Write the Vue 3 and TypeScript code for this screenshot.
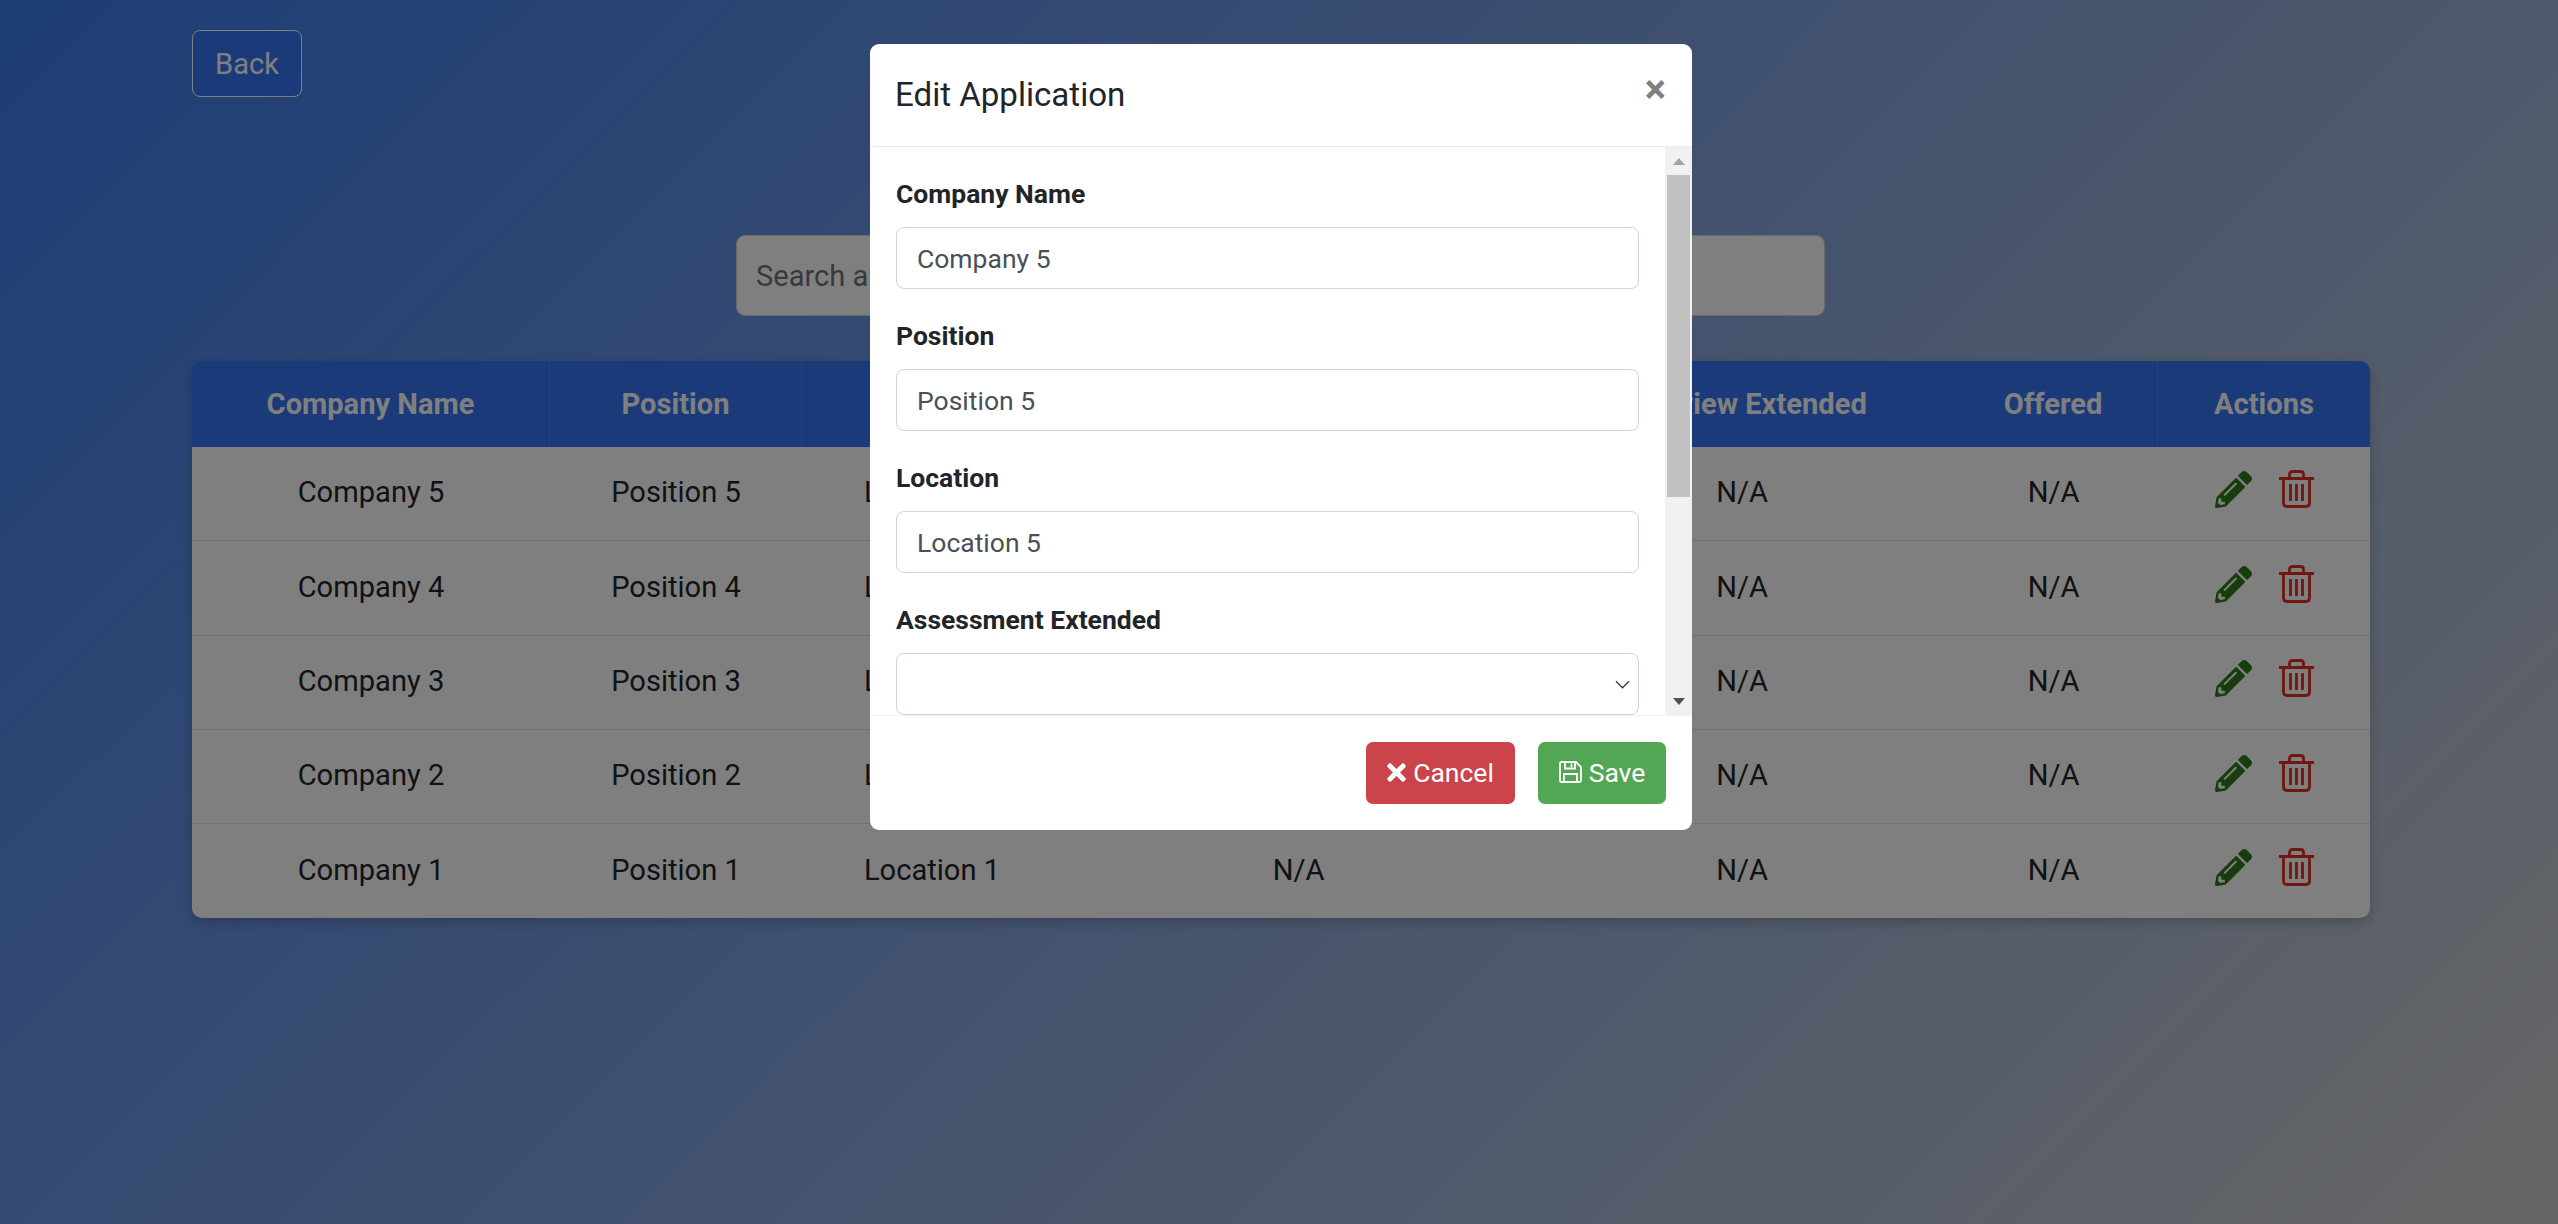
<script setup lang="ts">
interface Application {
  company: string;
  position: string;
  location: string;
}

const applications: Application[] = [5, 4, 3, 2, 1].map((n) => ({
  company: `Company ${n}`,
  position: `Position ${n}`,
  location: `Location ${n}`,
}));

const columns = [
  'Company Name',
  'Position',
  'Location',
  'Assessment Extended',
  'Interview Extended',
  'Offered',
  'Actions',
];

const textFields = [
  { label: 'Company Name', value: 'Company 5' },
  { label: 'Position', value: 'Position 5' },
  { label: 'Location', value: 'Location 5' },
];

const selectFields = ['Assessment Extended', 'Interview Extended', 'Offered'];
</script>

<template>
  <div class="page">
    <button class="back-btn">Back</button>

    <div class="search-row">
      <input class="search-input" type="text" placeholder="Search applications..." />
    </div>

    <table class="app-table">
      <colgroup>
        <col class="col-company" />
        <col class="col-position" />
        <col class="col-location" />
        <col class="col-assessment" />
        <col class="col-interview" />
        <col class="col-offered" />
        <col class="col-actions" />
      </colgroup>
      <thead>
        <tr>
          <th v-for="col in columns" :key="col">{{ col }}</th>
        </tr>
      </thead>
      <tbody>
        <tr v-for="app in applications" :key="app.company">
          <td>{{ app.company }}</td>
          <td>{{ app.position }}</td>
          <td>{{ app.location }}</td>
          <td>N/A</td>
          <td>N/A</td>
          <td>N/A</td>
          <td>
            <div class="actions">
              <svg class="icon-edit" viewBox="0 0 512 512">
                <path
                  d="M497.9 142.1l-46.1 46.1c-4.7 4.7-12.3 4.7-17 0l-111-111c-4.7-4.7-4.7-12.3 0-17l46.1-46.1c18.7-18.7 49.1-18.7 67.9 0l60.1 60.1c18.8 18.7 18.8 49.1 0 67.9zM284.2 99.8L21.6 362.4.4 483.9c-2.9 16.4 11.4 30.6 27.8 27.8l121.5-21.3 262.6-262.6c4.7-4.7 4.7-12.3 0-17l-111-111c-4.8-4.7-12.4-4.7-17.1 0zM124.1 339.9c-5.5-5.5-5.5-14.3 0-19.8l154-154c5.5-5.5 14.3-5.5 19.8 0s5.5 14.3 0 19.8l-154 154c-5.5 5.5-14.3 5.5-19.8 0zM88 424h48v36.3l-64.5 11.3-31.1-31.1L51.7 376H88v48z"
                />
              </svg>
              <svg class="icon-trash" viewBox="0 0 35 38">
                <path d="M0 8.5H35" />
                <path d="M10.5 8V4.5Q10.5 1.5 13.5 1.5H21.5Q24.5 1.5 24.5 4.5V8" />
                <path d="M4.5 8.5V33Q4.5 36.5 8 36.5H27Q30.5 36.5 30.5 33V8.5" />
                <path d="M11.5 14V31M17.5 14V31M23.5 14V31" />
              </svg>
            </div>
          </td>
        </tr>
      </tbody>
    </table>

    <div class="backdrop"></div>

    <div class="modal">
      <div class="modal-header">
        <h5 class="modal-title">Edit Application</h5>
        <span class="close">×</span>
      </div>
      <div class="modal-main">
        <div class="modal-body">
          <div v-for="field in textFields" :key="field.label" class="form-group">
            <label>{{ field.label }}</label>
            <input class="form-control" type="text" :value="field.value" />
          </div>
          <div v-for="label in selectFields" :key="label" class="form-group">
            <label>{{ label }}</label>
            <select class="form-control form-select"></select>
          </div>
        </div>
        <!-- полоса прокрутки рисуется вручную, скриншот скрывает настоящую -->
        <div class="scrollbar">
          <div class="scroll-btn">
            <svg class="arrow-up" viewBox="0 0 12 7"><path d="M6 0L12 7H0Z" /></svg>
          </div>
          <div class="scroll-thumb"></div>
          <div class="scroll-btn scroll-btn-down">
            <svg class="arrow-down" viewBox="0 0 12 7"><path d="M0 0H12L6 7Z" /></svg>
          </div>
        </div>
      </div>
      <div class="modal-footer">
        <button class="btn btn-cancel">
          <svg class="icon-times" viewBox="0 0 352 512">
            <path
              d="M242.72 256l100.07-100.07c12.28-12.28 12.28-32.19 0-44.48l-22.24-22.24c-12.28-12.28-32.19-12.28-44.48 0L176 189.28 75.93 89.21c-12.28-12.28-32.19-12.28-44.48 0L9.21 111.45c-12.28 12.28-12.28 32.19 0 44.48L109.28 256 9.21 356.07c-12.28 12.28-12.28 32.19 0 44.48l22.24 22.24c12.28 12.28 32.2 12.28 44.48 0L176 322.72l100.07 100.07c12.28 12.28 32.2 12.28 44.48 0l22.24-22.24c12.28-12.28 12.28-32.19 0-44.48L242.72 256z"
            />
          </svg>
          Cancel
        </button>
        <button class="btn btn-save">
          <svg class="icon-save" viewBox="0 0 23 22">
            <path d="M2.5 1H17L22 6V19.5Q22 21 20.5 21H2.5Q1 21 1 19.5V2.5Q1 1 2.5 1Z" />
            <path d="M6 1V7.5H16V1" />
            <path d="M12.5 2.5V6" />
            <path d="M5 21V13H18V21" />
          </svg>
          Save
        </button>
      </div>
    </div>
  </div>
</template>

<style scoped>
  .page {
    position: relative;
    box-sizing: border-box;
    height: 1224px;
    overflow: hidden;
    padding: 30px 188px 0 192px;
    background: linear-gradient(135deg, #3b7bee 0%, #cccccc 100%);
    font-family: Roboto, "Liberation Sans", sans-serif;
    color: #212529;
  }

  .back-btn {
    display: block;
    box-sizing: border-box;
    width: 110px;
    height: 67px;
    border: 1.5px solid #fff;
    border-radius: 8px;
    background: #3574f4;
    color: #fff;
    font: 400 29.1px Roboto, sans-serif;
  }

  .search-row {
    display: flex;
    margin-top: 138px;
    padding-left: 544px;
  }

  .search-input {
    box-sizing: border-box;
    width: 1089px;
    height: 81px;
    padding: 0 19px;
    border: 1.5px solid #ced4da;
    border-radius: 9px;
    background: #fff;
    font: 400 29.1px Roboto, sans-serif;
  }

  .search-input::placeholder {
    color: #6c757d;
  }

  .app-table {
    width: 2178px;
    margin-top: 45px;
    border-collapse: separate;
    border-spacing: 0;
    table-layout: fixed;
    border-radius: 10px;
    box-shadow: 0 4px 12px rgba(0, 0, 0, 0.2);
    font-size: 29.1px;
    line-height: 42.24px;
  }

  .col-company { width: 358px; }
  .col-position { width: 252px; }
  .col-location { width: 260px; }
  .col-assessment { width: 473px; }
  .col-interview { width: 414px; }
  .col-offered { width: 209px; }
  .col-actions { width: 212px; }

  th {
    padding: 21.5px 8px 22px;
    background: #3574f4;
    color: #fff;
    font-weight: 700;
    border-right: 1px solid rgba(255, 255, 255, 0.12);
  }

  th:nth-child(5) {
    border-right: none;
  }

  th:last-child {
    border-right: none;
    border-top-right-radius: 10px;
  }

  th:first-child {
    border-top-left-radius: 10px;
  }

  td {
    padding: 24.4px 8px 26.8px;
    background: #fff;
    text-align: center;
    border-bottom: 1px solid #dee2e6;
  }

  tbody tr:last-child td {
    border-bottom: none;
  }

  tbody tr:last-child td:first-child {
    border-bottom-left-radius: 10px;
  }

  tbody tr:last-child td:last-child {
    border-bottom-right-radius: 10px;
  }

  .actions {
    display: flex;
    justify-content: center;
    align-items: flex-end;
    gap: 27px;
    height: 42px;
    padding-bottom: 5px;
    box-sizing: border-box;
  }

  .icon-edit {
    width: 37px;
    height: 37px;
    fill: #2e7a18;
  }

  .icon-trash {
    width: 35px;
    height: 38px;
    fill: none;
    stroke: #e03020;
    stroke-width: 2.8;
  }

  .backdrop {
    position: absolute;
    inset: 0;
    background: rgba(0, 0, 0, 0.5);
  }

  .modal {
    position: absolute;
    top: 44px;
    left: 870px;
    width: 822px;
    border-radius: 9px;
    background: #fff;
    overflow: hidden;
  }

  .modal-header {
    box-sizing: border-box;
    display: flex;
    align-items: center;
    justify-content: space-between;
    height: 103px;
    padding: 0 26px 0 25px;
    border-bottom: 1.5px solid #e9ecef;
  }

  .modal-title {
    margin: 0;
    font-size: 33.1px;
    font-weight: 400;
    line-height: 1.2;
  }

  .close {
    margin: -10px 0 0;
    color: #808080;
    font-size: 40px;
    font-weight: 700;
    line-height: 1;
  }

  .modal-main {
    display: flex;
    height: 568px;
  }

  .modal-body {
    flex: 1;
    box-sizing: border-box;
    padding: 26px 0 26px 26px;
    overflow: hidden;
  }

  .scrollbar {
    display: flex;
    flex-direction: column;
    width: 27px;
    background: #f1f1f1;
  }

  .scroll-btn {
    display: flex;
    align-items: center;
    justify-content: center;
    height: 28px;
  }

  .scroll-btn-down {
    margin-top: auto;
  }

  .scroll-thumb {
    height: 322px;
    margin: 0 2px;
    background: #c1c1c1;
  }

  .arrow-up,
  .arrow-down {
    width: 12px;
    height: 7px;
  }

  .arrow-up {
    fill: #a3a3a3;
  }

  .arrow-down {
    fill: #505050;
  }

  .form-group {
    margin-bottom: 26px;
    width: 743px;
  }

  .form-group label {
    display: block;
    height: 39px;
    margin-bottom: 15px;
    font-size: 26.5px;
    font-weight: 700;
    line-height: 42px;
  }

  .form-control {
    display: block;
    box-sizing: border-box;
    width: 100%;
    height: 62px;
    padding: 0 20px;
    border: 1.5px solid #ced4da;
    border-radius: 8px;
    background-color: #fff;
    color: #495057;
    font: 400 26.5px Roboto, sans-serif;
  }

  .form-select {
    appearance: none;
    background-image: url("data:image/svg+xml,%3Csvg xmlns='http://www.w3.org/2000/svg' viewBox='0 0 16 9'%3E%3Cpath d='M1 1l7 7 7-7' fill='none' stroke='%23343a40' stroke-width='1.4'/%3E%3C/svg%3E");
    background-repeat: no-repeat;
    background-position: right 8px center;
    background-size: 15px 9px;
  }

  .modal-footer {
    box-sizing: border-box;
    display: flex;
    justify-content: flex-end;
    gap: 23px;
    height: 115px;
    padding: 26px 26px 0 0;
    border-top: 1px solid #f0f2f4;
  }

  .btn {
    display: flex;
    align-items: center;
    justify-content: center;
    gap: 7px;
    box-sizing: border-box;
    height: 62px;
    padding: 0 0 2px;
    border: none;
    border-radius: 7px;
    color: #fff;
    font: 400 26.5px Roboto, sans-serif;
  }

  .btn-cancel {
    width: 149px;
    background: #cb444a;
  }

  .btn-save {
    width: 128px;
    background: #53a653;
  }

  .icon-times {
    width: 19px;
    height: 27px;
    fill: #fff;
  }

  .icon-save {
    width: 23px;
    height: 22px;
    fill: none;
    stroke: #fff;
    stroke-width: 1.8;
  }
</style>

<style>
  body {
    margin: 0;
  }
</style>
